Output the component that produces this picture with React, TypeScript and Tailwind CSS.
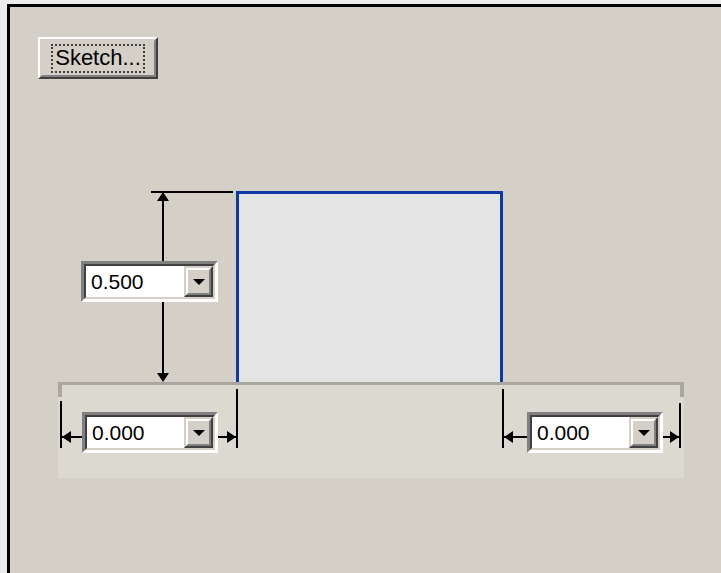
const font = { fontFamily: '"Liberation Sans", Arial, sans-serif' };

type ComboProps = { value: string; className: string };

// classic sunken combo box with a raised drop button
const Combo = ({ value, className }: ComboProps) => (
  <div
    className={`absolute flex h-[41px] border-[3px] border-t-[#808080] border-l-[#808080] border-b-white border-r-white ${className}`}
  >
    <div className="flex flex-1 items-center border-2 border-t-[#404040] border-l-[#404040] border-b-[#d4d0c8] border-r-[#d4d0c8] bg-white">
      <span className="flex-1 pl-[5px] text-[21px] leading-none text-black">
        {value}
      </span>
      <div className="flex h-full w-[29px] border-2 border-t-[#d4d0c8] border-l-[#d4d0c8] border-b-[#404040] border-r-[#404040]">
        <div className="flex flex-1 items-center justify-center border-2 border-t-white border-l-white border-b-[#808080] border-r-[#808080] bg-[#d4d0c8]">
          <svg width="12" height="6" viewBox="0 0 12 6">
            <polygon points="0,0 12,0 6,6" fill="#000" />
          </svg>
        </div>
      </div>
    </div>
  </div>
);

export default function App() {
  return (
    <div
      className="h-[573px] w-[721px] overflow-hidden bg-[#ececec] pl-[7px] pt-[4px]"
      style={font}
    >
      <div className="relative h-full border-l-[3px] border-t-[3px] border-black bg-[#d4d0c8]">
        {/* Sketch button */}
        <div className="relative z-10 ml-[28px] mt-[30px] flex h-[42px] w-[120px] border-2 border-t-white border-l-white border-b-[#404040] border-r-[#404040]">
          <div className="flex flex-1 items-center justify-center border-2 border-t-[#d4d0c8] border-l-[#d4d0c8] border-b-[#808080] border-r-[#808080] bg-[#d4d0c8]">
            <span className="flex h-[29px] items-center border-2 border-dotted border-[#404040] px-[2px] text-[22px] leading-none text-black">
              Sketch...
            </span>
          </div>
        </div>

        {/* dimension drawing, in page coordinates */}
        <svg
          className="absolute left-0 top-0"
          width="711"
          height="566"
          viewBox="10 7 711 566"
        >
          {/* base band */}
          <rect x="58" y="382" width="626" height="96" fill="#dcdad0" />
          <rect x="58" y="382" width="626" height="3" fill="#a9a79e" />
          <rect x="58" y="382" width="4" height="15" fill="#a9a79e" />
          <rect x="680" y="382" width="4" height="15" fill="#a9a79e" />

          {/* part outline */}
          <rect x="236" y="191" width="267" height="191" fill="#e4e4e4" />
          <rect x="236" y="191" width="3" height="191" fill="#0b3aa8" />
          <rect x="236" y="191" width="267" height="3" fill="#0b3aa8" />
          <rect x="500" y="191" width="3" height="191" fill="#0b3aa8" />

          {/* height dimension */}
          <rect x="151" y="191" width="82" height="2" fill="#000" />
          <rect x="162" y="193" width="2" height="68" fill="#000" />
          <polygon points="163,192 157,201 169,201" fill="#000" />
          <rect x="162" y="302" width="2" height="72" fill="#000" />
          <polygon points="163,382 157,373 169,373" fill="#000" />

          {/* left offset dimension */}
          <rect x="60" y="401" width="2" height="47" fill="#000" />
          <rect x="62" y="436" width="20" height="2" fill="#000" />
          <polygon points="62,437 71,431 71,443" fill="#000" />
          <rect x="218" y="436" width="18" height="2" fill="#000" />
          <polygon points="236,437 227,431 227,443" fill="#000" />
          <rect x="236" y="389" width="2" height="59" fill="#000" />

          {/* right offset dimension */}
          <rect x="502" y="389" width="2" height="59" fill="#000" />
          <rect x="504" y="436" width="23" height="2" fill="#000" />
          <polygon points="504,437 513,431 513,443" fill="#000" />
          <rect x="663" y="436" width="16" height="2" fill="#000" />
          <polygon points="679,437 670,431 670,443" fill="#000" />
          <rect x="679" y="403" width="2" height="45" fill="#000" />
        </svg>

        <Combo value="0.500" className="left-[71px] top-[254px] w-[137px]" />
        <Combo value="0.000" className="left-[72px] top-[405px] w-[136px]" />
        <Combo value="0.000" className="left-[517px] top-[405px] w-[136px]" />
      </div>
    </div>
  );
}
